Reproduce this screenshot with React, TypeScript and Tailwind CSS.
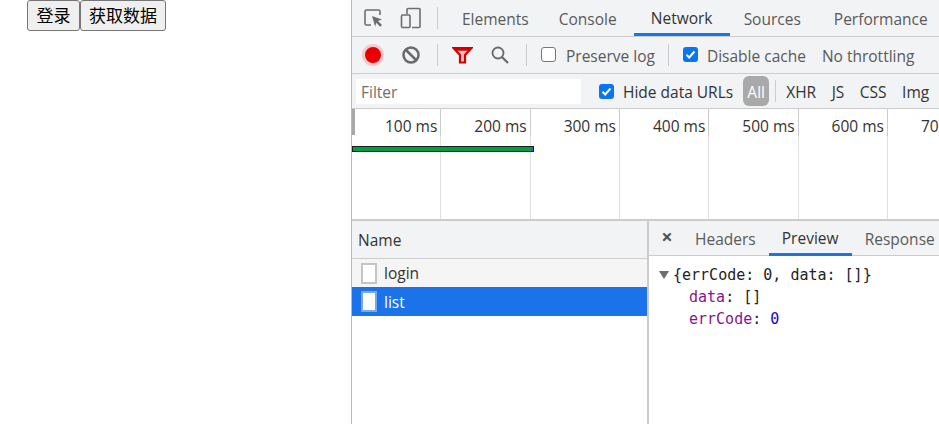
import React from 'react';

const uiFont = "font-['Open_Sans','Noto_Sans',sans-serif]";

const TopTab = ({ label, active }: { label: string; active?: boolean }) => (
  <div className={`h-[36px] flex items-center justify-center text-[15.5px] ${active ? 'w-[96px] text-[#333] border-b-[3px] border-[#1a73e8] pt-[5px]' : 'text-[#5a5a5a] pt-[3px]'}`}>
    {label}
  </div>
);

const Sep = ({ className }: { className?: string }) => (
  <div className={`w-px h-[22px] bg-[#ccc] shrink-0 ${className ?? ''}`} />
);

const Check = ({ on }: { on?: boolean }) => (
  on ? (
    <div className="w-[15px] h-[15px] rounded-[3px] bg-[#0b74f1] flex items-center justify-center shrink-0">
      <svg width="13" height="13" viewBox="0 0 13 13" fill="none">
        <path d="M2.5 6.8 L5.2 9.5 L10.5 3.5" stroke="#fff" strokeWidth="2" />
      </svg>
    </div>
  ) : (
    <div className="w-[15px] h-[15px] rounded-[3px] border border-[#767676] bg-white shrink-0" />
  )
);

const FileIcon = ({ selected }: { selected?: boolean }) => (
  <div className={`w-[16px] h-[21px] bg-white border-2 ${selected ? 'border-[#7aa7e8]' : 'border-[#c4c4c4]'} shrink-0`} />
);

const ticks = ['100 ms', '200 ms', '300 ms', '400 ms', '500 ms', '600 ms', '700 ms'];

export default function App() {
  return (
    <div className={`w-[939px] h-[424px] flex overflow-hidden bg-white ${uiFont}`}>
      {/* page under test */}
      <div className="w-[351px] shrink-0 pl-[27px] flex items-start">
        <button className="h-[31px] w-[53px] pb-[2px] bg-[#efefef] border border-[#767676] rounded-[3px] text-[17px] text-black font-['Noto_Sans_CJK_SC',sans-serif]">登录</button>
        <button className="h-[31px] w-[86px] pb-[2px] bg-[#efefef] border border-[#767676] rounded-[3px] text-[17px] text-black font-['Noto_Sans_CJK_SC',sans-serif]">获取数据</button>
      </div>

      {/* devtools */}
      <div className="flex-1 min-w-0 border-l border-[#b9b9b9] flex flex-col">
        {/* main tabs */}
        <div className="h-[37px] shrink-0 bg-[#f1f3f4] border-b border-[#ccc] flex items-center">
          <div className="w-[44px] flex justify-center">
            <svg width="22" height="22" viewBox="0 0 22 22" fill="none">
              <path d="M8 18H3.5a1.5 1.5 0 0 1-1.5-1.5v-12A1.5 1.5 0 0 1 3.5 3h12A1.5 1.5 0 0 1 17 4.500V8" stroke="#6e6e6e" strokeWidth="1.6" />
              <path d="M9 9l10 3.500-4 1.500 4 4-1.800 1.800-4-4-1 4z" fill="#6e6e6e" />
            </svg>
          </div>
          <div className="w-[24px] ml-[3px] flex justify-center">
            <svg width="24" height="24" viewBox="0 0 24 24" fill="none">
              <path d="M8 8V3.500A1 1 0 0 1 9 2.500h11a1 1 0 0 1 1 1v17a1 1 0 0 1-1 1h-7" stroke="#6e6e6e" strokeWidth="1.6" />
              <rect x="2.500" y="9" width="8.500" height="12.500" rx="1" stroke="#6e6e6e" strokeWidth="1.600" />
            </svg>
          </div>
          <Sep className="ml-[14px]" />
          <div className="flex items-center ml-[24px]">
            <TopTab label="Elements" />
            <div className="w-[30px]" />
            <TopTab label="Console" />
            <div className="w-[17px]" />
            <TopTab label="Network" active />
            <div className="w-[14px]" />
            <TopTab label="Sources" />
            <div className="w-[33px]" />
            <TopTab label="Performance" />
          </div>
        </div>

        {/* network toolbar */}
        <div className="h-[37px] shrink-0 bg-[#f1f3f4] border-b border-[#ccc] flex items-center text-[15.5px] text-[#5a5a5a]">
          <div className="w-[22px] h-[22px] ml-[10px] rounded-full bg-[#e80000] border-[3px] border-[#f3c9c9] shrink-0" />
          <svg className="ml-[17px] shrink-0" width="20" height="20" viewBox="0 0 20 20" fill="none">
            <circle cx="10" cy="10" r="7.500" stroke="#6a6a6a" strokeWidth="2.500" />
            <path d="M5 5l10 10" stroke="#6a6a6a" strokeWidth="2.500" />
          </svg>
          <Sep className="ml-[16px]" />
          <svg className="ml-[14px] shrink-0" width="21" height="18" viewBox="0 0 21 18" fill="none">
            <path d="M1.500 2h18l-6.500 7v7.500h-5V9z" fill="#f0c8c8" stroke="#d00000" strokeWidth="2.200" />
            <path d="M3 3.500h15" stroke="#d00000" strokeWidth="2.500" />
          </svg>
          <svg className="ml-[17px] shrink-0" width="20" height="20" viewBox="0 0 20 20" fill="none">
            <circle cx="8" cy="8" r="5.500" stroke="#6a6a6a" strokeWidth="1.800" />
            <path d="M12 12l6 6" stroke="#6a6a6a" strokeWidth="2.200" />
          </svg>
          <Sep className="ml-[16px]" />
          <div className="ml-[14px] -mt-[2px]"><Check /></div>
          <span className="ml-[10px] pt-[3px] whitespace-nowrap">Preserve log</span>
          <Sep className="ml-[13px]" />
          <div className="ml-[14px] -mt-[2px]"><Check on /></div>
          <span className="ml-[9px] pt-[3px] whitespace-nowrap">Disable cache</span>
          <span className="ml-[16px] pt-[3px] whitespace-nowrap">No throttling</span>
        </div>

        {/* filter row */}
        <div className="h-[34px] shrink-0 bg-[#f1f3f4] flex items-center text-[15.5px] text-[#333]">
          <div className="ml-[4px] w-[225px] h-[25px] bg-white pl-[5px] pt-[3px] text-[#6f6f6f] flex items-center shrink-0">Filter</div>
          <div className="ml-[18px]"><Check on /></div>
          <span className="ml-[9px] pt-[3px] whitespace-nowrap">Hide data URLs</span>
          <div className="ml-[10px] w-[26px] h-[30px] pt-[3px] rounded-[6px] bg-[#a9a9a9] text-white flex items-center justify-center shrink-0">All</div>
          <Sep className="ml-[6px]" />
          <div className="ml-[10px] pt-[3px] flex gap-[15.5px] whitespace-nowrap">
            <span>XHR</span>
            <span>JS</span>
            <span>CSS</span>
            <span>Img</span>
          </div>
        </div>

        {/* overview timeline */}
        <div className="h-[111px] shrink-0 relative border-t border-[#ccc] flex overflow-hidden text-[15.5px] text-[#333]">
          {ticks.map((t) => (
            <div key={t} className="w-[89.33px] h-full shrink-0 border-r border-[#e0e0e0]">
              <div className="h-[27px] -mr-px border-r border-[#ccc] text-right pr-[3px] pt-[7px] whitespace-nowrap leading-[20px]">{t}</div>
            </div>
          ))}
          <div className="absolute left-0 top-0 w-[3px] h-[26px] bg-[#a8a8a8]" />
          <div className="absolute left-0 top-[37px] w-[182px] h-[6px] bg-[#00a040] border border-[#1c1c1c]">
            <div className="absolute right-0 top-0 w-[2px] h-full bg-[#0b6fbf]" />
          </div>
        </div>

        {/* bottom panes */}
        <div className="flex-1 min-h-0 flex border-t-2 border-[#ccc]">
          <div className="w-[297px] shrink-0 border-r-2 border-[#ccc] flex flex-col">
            <div className="h-[38px] pt-[2px] bg-[#f1f3f4] border-b border-[#ccc] flex items-center pl-[6px] text-[15.5px] text-[#333]">Name</div>
            <div className="h-[28px] bg-[#f5f5f5] flex items-center pl-[9px] text-[15.5px] text-[#333]">
              <FileIcon />
              <span className="ml-[7px] pt-[2px]">login</span>
            </div>
            <div className="h-[29px] bg-[#1a73e8] flex items-center pl-[9px] text-[15.5px] text-white">
              <FileIcon selected />
              <span className="ml-[7px] pt-[2px]">list</span>
            </div>
          </div>
          <div className="flex-1 min-w-0 flex flex-col">
            <div className="h-[35px] bg-[#f1f3f4] border-b border-[#ccc] flex items-center text-[15.5px] text-[#5a5a5a] whitespace-nowrap shrink-0">
              <span className="ml-[12px] w-[12px] text-[#555] text-[20px] font-bold leading-none flex justify-center -mt-[2px]">×</span>
              <span className="ml-[22px] pt-[4px]">Headers</span>
              <div className="ml-[13px] w-[83px] h-[35px] border-b-[3px] border-[#1a73e8] flex items-center justify-center text-[#333] pt-[4px]">Preview</div>
              <span className="ml-[13px] pt-[4px]">Response</span>
            </div>
            <div className="pt-[8px] font-['DejaVu_Sans_Mono',monospace] text-[15px] leading-[22px]">
              <div className="flex items-center pl-[10px] whitespace-pre text-[#222]">
                <svg className="mr-[4px]" width="10" height="8" viewBox="0 0 10 8"><path d="M0 0h10L5 8z" fill="#6e6e6e" /></svg>
                <span>{'{errCode: 0, data: []}'}</span>
              </div>
              <div className="pl-[40px] whitespace-pre text-[#222]"><span className="text-[#881391]">data</span>: []</div>
              <div className="pl-[40px] whitespace-pre text-[#222]"><span className="text-[#881391]">errCode</span>: <span className="text-[#1c00cf]">0</span></div>
            </div>
          </div>
        </div>
      </div>
    </div>
  );
}
